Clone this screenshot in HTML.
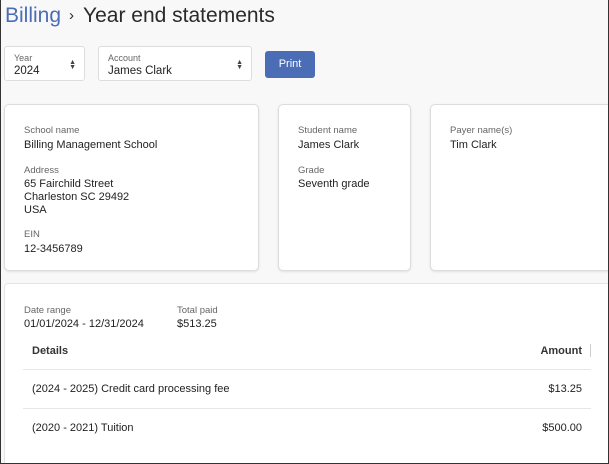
<!DOCTYPE html>
<html><head><meta charset="utf-8"><style>
*{box-sizing:border-box;margin:0;padding:0}
html,body{width:609px;height:464px;overflow:hidden}
body{background:#f8f8f8;font-family:"Liberation Sans",sans-serif;color:#222;position:relative}
.abs{position:absolute}
.frame{left:0;top:0;width:609px;height:464px;border:1px solid #333;border-top:none;pointer-events:none;z-index:9}
.h1{left:5px;top:4px;font-size:21px;color:#2a2a2a;white-space:nowrap}
.h1 .b{color:#4a6db5}
.h1 .sep{font-size:15px;margin:0 9px 0 8px;position:relative;top:-2px}
.sel{background:#fff;border:1px solid #ddd;border-radius:3px}
.sel .l{position:absolute;left:9px;top:6px;font-size:9px;color:#666}
.sel .v{position:absolute;left:9px;top:18px;font-size:11.5px;color:#222}
.sel .ar{position:absolute;right:8px;top:13px;font-size:7px;line-height:5px;color:#444}
.btn{left:266px;top:51px;width:50px;height:27px;background:#4a6db5;color:#fff;border-radius:3px;font-size:11px;text-align:center;line-height:27px}
.card{background:#fff;border:1px solid #ddd;border-radius:5px;box-shadow:0 1px 2px rgba(0,0,0,.1)}
.lab{font-size:9.5px;color:#666;position:absolute}
.val{font-size:11px;color:#222;position:absolute;line-height:13px;white-space:nowrap}
.r{text-align:right;width:100px}
.row{position:absolute;left:23px;width:568px;border-bottom:1px solid #e6e6e6}
</style></head><body>
<div class="abs frame"></div>
<div class="abs h1"><span class="b">Billing</span><span class="sep">›</span>Year end statements</div>

<div class="abs sel" style="left:4px;top:46px;width:81px;height:35px"><div class="l">Year</div><div class="v">2024</div><div class="ar">▲<br>▼</div></div>
<div class="abs sel" style="left:98px;top:46px;width:154px;height:35px"><div class="l">Account</div><div class="v">James Clark</div><div class="ar">▲<br>▼</div></div>
<div class="abs btn" style="left:265px">Print</div>

<div class="abs card" style="left:4px;top:104px;width:255px;height:167px">
<div class="lab" style="left:19px;top:20px">School name</div>
<div class="val" style="left:19px;top:34px">Billing Management School</div>
<div class="lab" style="left:19px;top:60px">Address</div>
<div class="val" style="left:19px;top:73px">65 Fairchild Street<br>Charleston SC 29492<br>USA</div>
<div class="lab" style="left:19px;top:124px">EIN</div>
<div class="val" style="left:19px;top:138px">12-3456789</div>
</div>
<div class="abs card" style="left:278px;top:104px;width:133px;height:167px">
<div class="lab" style="left:19px;top:20px">Student name</div>
<div class="val" style="left:19px;top:34px">James Clark</div>
<div class="lab" style="left:19px;top:60px">Grade</div>
<div class="val" style="left:19px;top:73px">Seventh grade</div>
</div>
<div class="abs card" style="left:430px;top:104px;width:190px;height:167px">
<div class="lab" style="left:19px;top:20px">Payer name(s)</div>
<div class="val" style="left:19px;top:34px">Tim Clark</div>
</div>

<div class="abs" style="left:4px;top:283px;width:620px;height:190px;background:#fff;border:1px solid #e4e4e4;border-radius:4px"></div>
<div class="lab" style="left:24px;top:305px">Date range</div>
<div class="val" style="left:24px;top:318px">01/01/2024 - 12/31/2024</div>
<div class="lab" style="left:177px;top:305px">Total paid</div>
<div class="val" style="left:177px;top:318px">$513.25</div>

<div class="row" style="top:336px;height:34px"></div>
<div class="val" style="left:32px;top:345px;font-weight:bold;color:#333">Details</div>
<div class="val r" style="left:482px;top:345px;font-weight:bold;color:#333">Amount</div>
<div class="abs" style="left:590px;top:344px;width:1px;height:13px;background:#ccc"></div>
<div class="row" style="top:370px;height:39px"></div>
<div class="val" style="left:32px;top:383px">(2024 - 2025) Credit card processing fee</div>
<div class="val r" style="left:482px;top:383px">$13.25</div>
<div class="val" style="left:32px;top:422px">(2020 - 2021) Tuition</div>
<div class="val r" style="left:482px;top:422px">$500.00</div>
</body></html>
